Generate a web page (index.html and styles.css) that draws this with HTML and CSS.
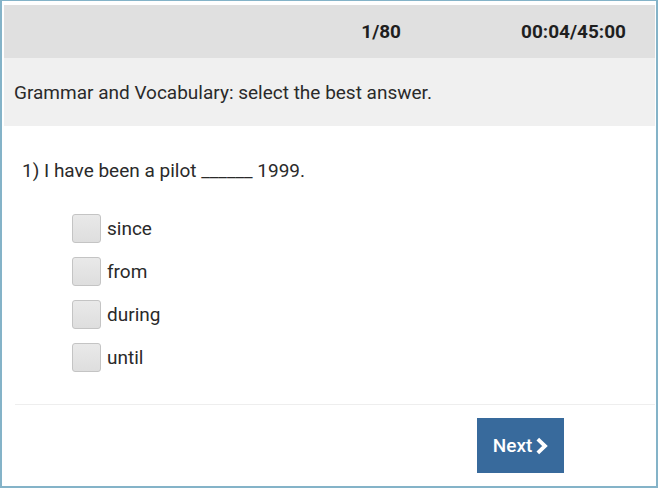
FILE: index.html
```html
<!DOCTYPE html>
<html lang="en">
<head>
<meta charset="utf-8">
<title>Test</title>
<link rel="stylesheet" href="styles.css">
</head>
<body>
<div class="frame">
  <header class="topbar">
    <span class="counter">1/80</span>
    <span class="timer">00:04/45:00</span>
  </header>
  <div class="instructions">Grammar and Vocabulary: select the best answer.</div>
  <main class="content">
    <p class="question">1) I have been a pilot ______ 1999.</p>
    <ul class="options">
      <li class="option"><span class="box"></span><span class="label">since</span></li>
      <li class="option"><span class="box"></span><span class="label">from</span></li>
      <li class="option"><span class="box"></span><span class="label">during</span></li>
      <li class="option"><span class="box"></span><span class="label">until</span></li>
    </ul>
  </main>
  <footer class="footer">
    <button class="next">Next <svg class="chev" width="13" height="18" viewBox="0 0 13 18"><path d="M2.8 2.2 L10 9 L2.8 15.8" fill="none" stroke="#fff" stroke-width="3.8" stroke-linejoin="miter"/></svg></button>
  </footer>
</div>
</body>
</html>
```
FILE: styles.css
```css
html, body {
  margin: 0;
  padding: 0;
  background: #fff;
}
body {
  font-family: Roboto, "Liberation Sans", sans-serif;
  color: #222;
}
.frame {
  box-sizing: border-box;
  width: 658px;
  height: 488px;
  border-style: solid;
  border-color: #84b3c8;
  border-width: 1px 2px 2px 2px;
  padding: 4px 1px 0 2px;
  display: flex;
  flex-direction: column;
}
.topbar {
  height: 53px;
  background: #e0e0e0;
  display: flex;
  align-items: center;
  justify-content: flex-end;
  padding-right: 29px;
  gap: 120px;
  font-weight: bold;
  font-size: 19px;
  color: #1f1f1f;
}
.instructions {
  height: 68px;
  background: #f0f0f0;
  display: flex;
  align-items: center;
  padding-left: 10px;
  font-size: 19px;
  color: #2a2a2a;
}
.content {
  padding: 33px 0 0 18px;
  flex: 1;
}
.question {
  margin: 0;
  font-size: 19px;
  line-height: 24px;
  color: #2a2a2a;
}
.options {
  list-style: none;
  margin: 31px 0 0 50px;
  padding: 0;
  display: flex;
  flex-direction: column;
  gap: 15px;
}
.option {
  display: flex;
  align-items: center;
  gap: 6px;
  height: 28px;
}
.box {
  box-sizing: border-box;
  width: 29px;
  height: 29px;
  border: 1px solid #c4c4c4;
  border-radius: 3px;
  background: linear-gradient(#e9e9e9, #dedede);
}
.label {
  font-size: 19px;
  color: #2a2a2a;
}
.footer {
  margin-left: 11px;
  border-top: 1px solid #eeeeee;
  height: 82px;
  display: flex;
  justify-content: flex-end;
  padding: 13px 91px 0 0;
  box-sizing: border-box;
}
.next {
  width: 87px;
  height: 55px;
  background: #386a9c;
  border: none;
  color: #fff;
  font-family: Roboto, "Liberation Sans", sans-serif;
  font-size: 19px;
  font-weight: 500;
  display: flex;
  align-items: center;
  justify-content: center;
  gap: 3px;
  padding: 0;
}
.chev {
  display: block;
}
```
